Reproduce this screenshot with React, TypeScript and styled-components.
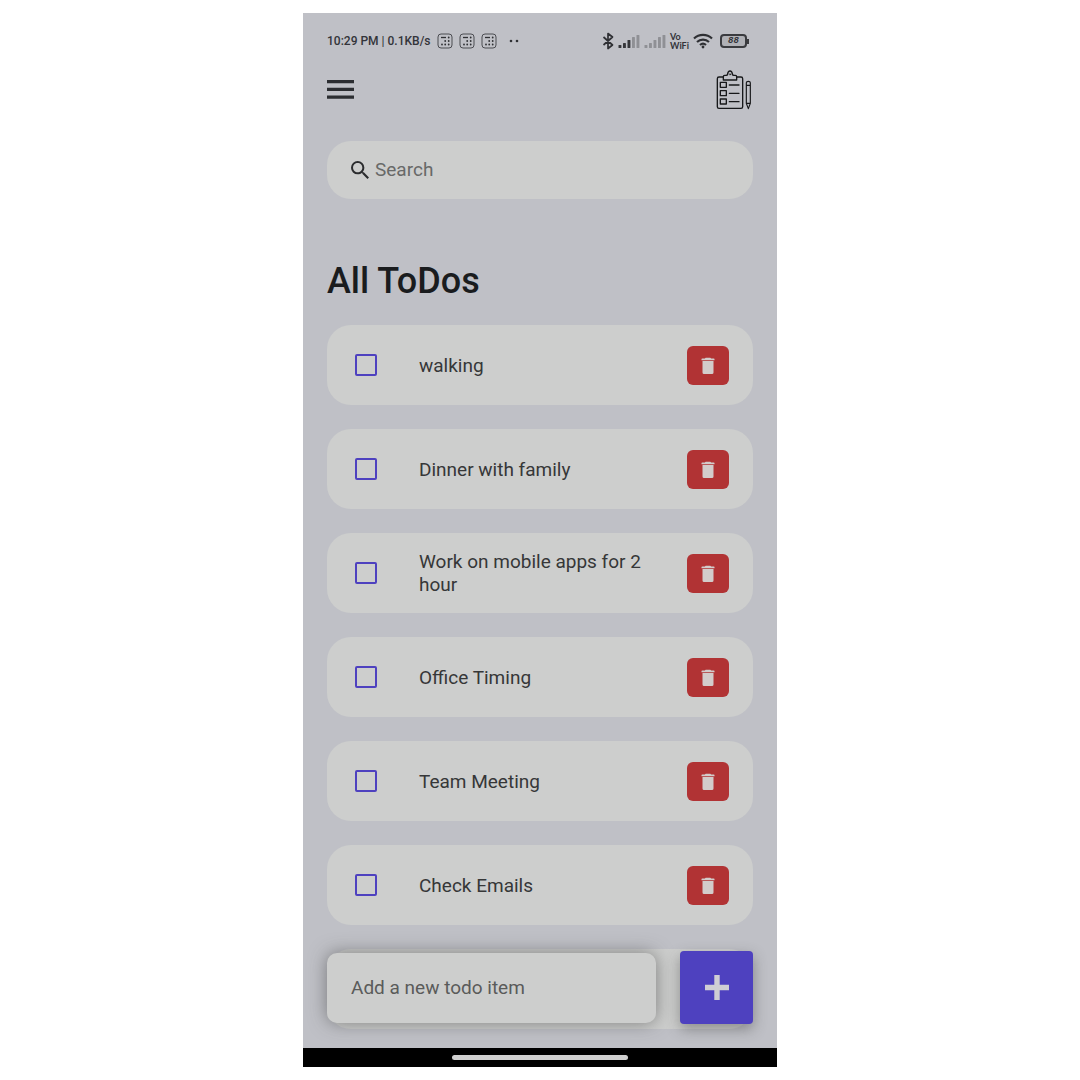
import React from "react";
import styled, { createGlobalStyle } from "styled-components";

const color = {
  surface: "#bfc0c6",
  card: "#cdcecd",
  ink: "#1a1c1e",
  text: "#363738",
  hint: "#686968",
  hintStrong: "#5a5b5a",
  violet: "#4e41bf",
  red: "#b13334",
  status: "#33343a",
};

const GlobalStyle = createGlobalStyle`
  *, *::before, *::after { box-sizing: border-box; }
  body {
    margin: 0;
    background: #fff;
    font-family: Roboto, "Liberation Sans", sans-serif;
    color: ${color.text};
  }
  button, input { font: inherit; color: inherit; }
`;

const Page = styled.div`
  display: flex;
  justify-content: center;
  padding: 13px 0;
`;

const Phone = styled.div`
  width: 100%;
  max-width: 474px;
  background: ${color.surface};
`;

const Screen = styled.div`
  position: relative;
  padding: 0 24px 19px;
`;

const StatusBar = styled.div`
  display: flex;
  align-items: center;
  justify-content: space-between;
  height: 56px;
  color: ${color.status};
`;

const StatusGroup = styled.div<{ $gap: number }>`
  display: flex;
  align-items: center;
  gap: ${(p) => p.$gap}px;
`;

const Clock = styled.span`
  font-size: 12px;
  font-weight: 500;
  line-height: 16px;
  white-space: nowrap;
`;

const Carrier = styled.span`
  font: 700 9px/9px Lato, sans-serif;
  white-space: pre-line;
`;

const Header = styled.header`
  display: flex;
  align-items: center;
  justify-content: space-between;
  height: 40px;
`;

const MenuButton = styled.button`
  display: flex;
  padding: 0;
  border: 0;
  background: none;
`;

const SearchBox = styled.label`
  display: flex;
  align-items: center;
  gap: 6px;
  height: 58px;
  margin-top: 32px;
  padding: 0 24px;
  border-radius: 24px;
  background: ${color.card};
`;

const TextField = styled.input<{ $hint?: string }>`
  flex: 1;
  min-width: 0;
  height: 24px;
  padding: 0;
  border: 0;
  outline: 0;
  background: none;
  font-size: 19px;
  line-height: 24px;
  &::placeholder { color: ${(p) => p.$hint ?? color.hint}; opacity: 1; }
`;

const Title = styled.h1`
  margin: 62px 0 24px;
  font-size: 36px;
  font-weight: 500;
  line-height: 40px;
  color: ${color.ink};
`;

const List = styled.ul`
  display: flex;
  flex-direction: column;
  gap: 24px;
  margin: 0;
  padding: 0;
  list-style: none;
`;

const Card = styled.li`
  display: flex;
  align-items: center;
  min-height: 80px;
  padding: 16px 24px 16px 28px;
  border-radius: 24px;
  background: ${color.card};
`;

const ItemLabel = styled.label`
  display: flex;
  flex: 1;
  align-items: center;
  gap: 42px;
  padding-right: 32px;
  font-size: 19px;
  line-height: 23px;
`;

const Tick = styled.input`
  flex: none;
  appearance: none;
  width: 22px;
  height: 22px;
  margin: 0;
  border: 2px solid ${color.violet};
  border-radius: 2px;
  &:checked { background: ${color.violet}; }
`;

const DeleteButton = styled.button`
  display: flex;
  flex: none;
  align-items: center;
  justify-content: center;
  width: 42px;
  height: 39px;
  padding: 2px 0 0;
  border: 0;
  border-radius: 6px;
  background: ${color.red};
`;

const AddForm = styled.form`
  position: absolute;
  right: 24px;
  bottom: 24px;
  left: 24px;
  display: flex;
  align-items: center;
  gap: 24px;
`;

const AddField = styled.label`
  display: flex;
  flex: 1;
  align-items: center;
  height: 70px;
  padding: 0 24px;
  border-radius: 10px;
  background: ${color.card};
  box-shadow: 0 0 18px rgba(60, 60, 60, 0.55);
`;

const AddButton = styled.button`
  display: flex;
  align-items: center;
  justify-content: center;
  width: 73px;
  height: 73px;
  padding: 0;
  border: 0;
  border-radius: 4px;
  background: ${color.violet};
  box-shadow: 0 5px 14px rgba(50, 50, 50, 0.42);
`;

const NavBar = styled.div`
  display: flex;
  align-items: center;
  justify-content: center;
  height: 19px;
  background: #000;
`;

const NavPill = styled.div`
  width: 176px;
  height: 5px;
  border-radius: 3px;
  background: #cfcfcf;
`;

const NoticeIcon = () => (
  <svg width="16" height="16" viewBox="0 0 16 16" fill="none" stroke="#4b4c51" strokeWidth="1">
    <rect x="1" y="1" width="14" height="14" rx="3" />
    <path d="M4 4.500h5" stroke="#2f3034" strokeWidth="1.300" />
    <g fill="#2f3034" stroke="none">
      {[[11.7, 4.5], [8.2, 8], [11.7, 8], [5, 11.500], [8.2, 11.500], [11.7, 11.500]].map(([x, y]) => (
        <circle key={`${x}-${y}`} cx={x} cy={y} r="0.9" />
      ))}
    </g>
  </svg>
);

const DotsIcon = () => (
  <svg width="10" height="4" viewBox="0 0 10 4" fill="#2f3034">
    <circle cx="2" cy="2" r="1.300" />
    <circle cx="8" cy="2" r="1.300" />
  </svg>
);

const BluetoothIcon = () => (
  <svg width="12" height="18" viewBox="0 0 12 18" fill="none" stroke="#2f3034" strokeWidth="1.700" strokeLinejoin="round">
    <path d="M1.500 5l9 8L6 16.500v-15L10.500 5l-9 8" />
  </svg>
);

const SignalIcon = ({ strength }: { strength: number }) => (
  <svg width="22" height="14" viewBox="0 0 22 14">
    {[3, 5, 8, 11, 13].map((h, i) => (
      <rect key={h} x={i * 4.5 + 0.5} y={14 - h} width="2.900" height={h} rx="0.500" fill={i < strength ? "#35363a" : "#8f9095"} />
    ))}
  </svg>
);

const WifiIcon = () => (
  <svg width="20" height="16" viewBox="0 0 20 16" fill="none" stroke="#2f3034" strokeWidth="2.200">
    <path d="M1 5.500a13 13 0 0 1 18 0M4 9a8.700 8.700 0 0 1 12 0M7 12a4.500 4.500 0 0 1 6 0" />
    <circle cx="10" cy="14" r="1.400" fill="#2f3034" stroke="none" />
  </svg>
);

const BatteryShell = styled.span`
  display: flex;
  align-items: center;
  padding: 0 4px 0 3px;
  &::after {
    content: "";
    width: 2px;
    height: 5px;
    background: #3a3b3f;
  }
`;

const BatteryLevel = styled.span`
  width: 27px;
  height: 14px;
  border: 2px solid #3a3b3f;
  border-radius: 4px;
  background: #b0b1b6;
  font: italic 700 9px/11px "Liberation Mono", monospace;
  text-align: center;
`;

const MenuIcon = () => (
  <svg width="27" height="19" viewBox="0 0 27 19" fill="#2b2d31">
    <path d="M0 0h27v3.300H0zM0 7.800h27v3.200H0zM0 15.500h27v3.300H0z" />
  </svg>
);

const ClipboardIcon = () => (
  <svg width="36" height="40" viewBox="33 13 108 120" fill="none" stroke="#17181a" strokeWidth="4" strokeLinejoin="round" strokeLinecap="round" overflow="visible">
    <path d="M52 37H39q-5 0-5 5v84q0 5 5 5h66q5 0 5-5V42q0-5-5-5H92" />
    <path d="M52 46V36q0-4 4-4h5q3 0 4-4 1-9 7-9t7 9q1 4 4 4h5q4 0 4 4v10z" />
    <circle cx="72" cy="29" r="2" strokeWidth="2" />
    <path d="M43 53h18v15H43zM43 78h18v15H43zM43 103h18v15H43zM70 61h29M70 86h29M70 111h29" />
    <path d="M121 54q0-4 6-4t6 4v62l-6 16-6-16zM121 62h12M121 116h12" strokeWidth="3.500" />
  </svg>
);

const SearchIcon = () => (
  <svg width="18" height="18" viewBox="3 3 17.500 17.500" fill="#2b2c2e">
    <path d="M15.500 14h-.79l-.28-.27A6.471 6.471 0 0 0 16 9.500 6.500 6.500 0 1 0 9.500 16c1.610 0 3.090-.59 4.230-1.570l.27.28v.79l5 4.990L20.490 19l-4.990-5zm-6 0C7.010 14 5 11.990 5 9.500S7.010 5 9.500 5 14 7.010 14 9.500 11.990 14 9.500 14z" />
  </svg>
);

const TrashIcon = () => (
  <svg width="14" height="18" viewBox="0 0 14 18" fill="#d3cccb">
    <path d="M.5 3.200V2q0-.6.700-.6h2.600L4.700.7h4.600l.9.700h2.600q.7 0 .7.600v1.200zM1.500 4.100h11v11.400q0 1.500-1.500 1.500H3q-1.500 0-1.500-1.500z" />
  </svg>
);

const PlusIcon = () => (
  <svg width="24" height="25" viewBox="0 0 24 25" fill="#cfced4">
    <path d="M9.300 0h5.400v9.800H24v5.400h-9.300V25H9.300v-9.800H0V9.800h9.300z" />
  </svg>
);

const todos = [
  "walking",
  "Dinner with family",
  "Work on mobile apps for 2 hour",
  "Office Timing",
  "Team Meeting",
  "Check Emails",
];

export default function App() {
  return (
    <>
      <GlobalStyle />
      <Page>
        <Phone>
          <Screen>
            <StatusBar>
              <StatusGroup $gap={6}>
                <Clock>10:29 PM | 0.1KB/s</Clock>
                <NoticeIcon />
                <NoticeIcon />
                <NoticeIcon />
                <span />
                <DotsIcon />
              </StatusGroup>
              <StatusGroup $gap={4}>
                <BluetoothIcon />
                <SignalIcon strength={3} />
                <SignalIcon strength={0} />
                <Carrier>{"Vo\nWiFi"}</Carrier>
                <WifiIcon />
                <BatteryShell>
                  <BatteryLevel>88</BatteryLevel>
                </BatteryShell>
              </StatusGroup>
            </StatusBar>
            <Header>
              <MenuButton type="button" aria-label="Menu">
                <MenuIcon />
              </MenuButton>
              <ClipboardIcon />
            </Header>
            <main>
              <SearchBox>
                <SearchIcon />
                <TextField type="text" placeholder="Search" aria-label="Search" />
              </SearchBox>
              <Title>All ToDos</Title>
              <List>
                {todos.map((todo) => (
                  <Card key={todo}>
                    <ItemLabel>
                      <Tick type="checkbox" />
                      <span>{todo}</span>
                    </ItemLabel>
                    <DeleteButton type="button" aria-label="Delete">
                      <TrashIcon />
                    </DeleteButton>
                  </Card>
                ))}
                {/* the list runs on underneath the add bar */}
                <Card aria-hidden="true" />
              </List>
            </main>
            <AddForm onSubmit={(e) => e.preventDefault()}>
              <AddField>
                <TextField
                  type="text"
                  placeholder="Add a new todo item"
                  aria-label="Add a new todo item"
                  $hint={color.hintStrong}
                />
              </AddField>
              <AddButton type="submit" aria-label="Add">
                <PlusIcon />
              </AddButton>
            </AddForm>
          </Screen>
          <NavBar>
            <NavPill />
          </NavBar>
        </Phone>
      </Page>
    </>
  );
}
